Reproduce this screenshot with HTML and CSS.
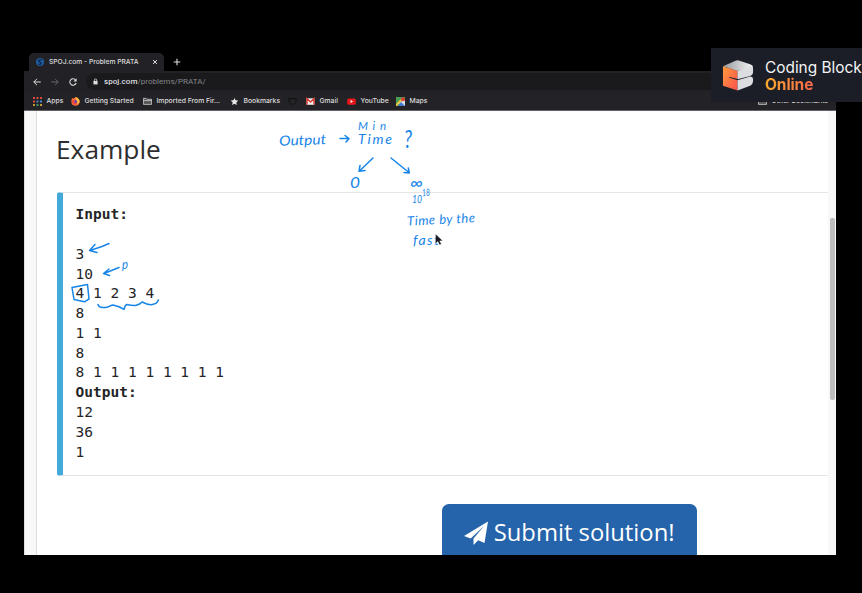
FILE: index.html
```html
<!DOCTYPE html>
<html lang="en">
<head>
<meta charset="utf-8">
<title>SPOJ.com - Problem PRATA</title>
<link rel="stylesheet" href="styles.css">
</head>
<body>
<main class="browser">
  <div class="tabs">
    <div class="tab">
      <svg class="favicon" viewBox="0 0 8 8"><circle cx="4" cy="4" r="4" fill="#1e5b9d"/><path d="M5.800 1.800C3.500 1 2 2.500 3.200 3.500S6 5 4.500 6.200L2.400 6.400" fill="none" stroke="#0c2345" stroke-width="1.200"/></svg>
      <span class="tab-title">SPOJ.com - Problem PRATA</span>
      <svg class="close" viewBox="0 0 6 6"><path d="M1 1l4 4M5 1l-4 4" stroke="#ddd" stroke-width="1"/></svg>
    </div>
    <svg class="plus" viewBox="0 0 8 8"><path d="M4 .7v6.600M.7 4h6.600" stroke="#ddd" stroke-width="1.100"/></svg>
  </div>
  <div class="toolbar">
    <svg class="nav" viewBox="0 0 8 8"><path d="M7.800 4H.8M4 .8L.8 4 4 7.200" fill="none" stroke="#dedede"/></svg>
    <svg class="nav" viewBox="0 0 8 8"><path d="M.2 4h7M4 .8L7.200 4 4 7.200" fill="none" stroke="#66666a"/></svg>
    <svg class="nav" viewBox="0 0 8 8"><path d="M6.700 2.200A3.200 3.200 0 1 0 7.100 5" fill="none" stroke="#dedede" stroke-width="1.100"/><path d="M7.600.3v3.200H4.400z" fill="#dedede"/></svg>
    <div class="address">
      <svg class="lock" viewBox="0 0 6 7"><path d="M.5 2.800h5V7h-5z" fill="#ddd"/><path d="M1.600 3V1.800a1.400 1.400 0 0 1 2.800 0V3" fill="none" stroke="#ddd" stroke-width=".9"/></svg>
      <span class="url"><b>spoj.com</b>/problems/PRATA/</span>
    </div>
  </div>
  <nav class="bookmarks">
    <span class="bm apps"><svg viewBox="0 0 9 9"><g fill="#d94b3d"><path d="M0 0h2v2H0zM0 3.500h2v2H0z"/><path d="M3.500 0h2v2h-2zM7 0h2v2H7z"/></g><path d="M0 7h2v2H0zM7 7h2v2H7z" fill="#c69b36"/><path d="M3.500 3.500h2v2h-2zM7 3.500h2v2H7z" fill="#4285c9"/><path d="M3.500 7h2v2h-2z" fill="#3f9a60"/></svg><span>Apps</span></span>
    <span class="bm start"><svg viewBox="0 0 10 10"><path d="M1 2l1-1 1 1 2-2c3 1 5 3 4.500 6a4.600 4.600 0 0 1-9 0C.3 4 .5 3 1 2z" fill="#ff7139"/><path d="M5 0c3 1 5 3.200 4.500 6L7 8z" fill="#ffbd3c"/><circle cx="5" cy="5" r="1.800" fill="#673bc4"/><path d="M1 4c2-1 3.500 0 3.500 1L3 6c1 1.500 3 1 4-.5 0 4-6 4-6-1.500z" fill="#f0443b"/></svg><span>Getting Started</span></span>
    <span class="bm import"><svg viewBox="0 0 10 9"><path d="M.5 7.700V1h3l1 1h5v5.700zM.5 3.500h9" fill="#555" stroke="#ddd" stroke-width=".8"/></svg><span>Imported From Fir...</span></span>
    <span class="bm stars"><svg viewBox="0 0 10 10"><path d="M5 1l1.200 2.700 3 .3L7 6l.7 3L5 7.400 2.300 9 3 6 .8 4l3-.3z" fill="#e8e8e8"/></svg><span>Bookmarks</span></span>
    <span class="bm git"><svg viewBox="0 0 9 9"><path d="M3 8.200V6.600C1 6 .7 5 1 3L.9 1l1.500.6h4L8 1v2c.4 2-.2 3-2 3.600v1.600" fill="none" stroke="#101012" stroke-width="1"/></svg></span>
    <span class="bm gmail"><svg viewBox="0 0 9 9"><path d="M.5 1.300h8v6.500h-8z" fill="#eee"/><path d="M1 7.700V1.500L4.500 5 8 1.500v6.200" fill="none" stroke="#d83b32" stroke-width="1.400"/></svg><span>Gmail</span></span>
    <span class="bm tube"><svg viewBox="0 0 9 9"><rect x=".2" y="1.400" width="8.600" height="6.300" rx="1.500" fill="#e8181b"/><path d="M3.600 3.100v2.800L6 4.500z" fill="#fff"/></svg><span>YouTube</span></span>
    <span class="bm maps"><svg viewBox="0 0 9 9"><path d="M0 0h9v9H0z" fill="#4b9d54"/><path d="M9 2v7H5L3 6z" fill="#d9dfe5"/><path d="M2 9l3-4 4 4z" fill="#3f78d0"/><path d="M0 7l6-6 1 1-6 7H0z" fill="#f1c744"/><circle cx="7" cy="2.200" r="2" fill="#d93e32"/></svg><span>Maps</span></span>
    <span class="bm other"><svg viewBox="0 0 10 9"><path d="M.5 7.700V1h3l1 1h5v5.700z" fill="#555" stroke="#ddd" stroke-width=".8"/></svg><span>Other Bookmarks</span></span>
  </nav>
  <div class="page">
    <section class="content">
      <h2>Example</h2>
      <pre><b>Input:</b>

3
10
4 1 2 3 4
8
1 1
8
8 1 1 1 1 1 1 1 1
<b>Output:</b>
12
36
1</pre>
      <div class="submit">
        <svg viewBox="0 0 24 24"><path d="M0 15L24 .5 20.500 22l-6.300-2.700L9.500 24v-6.500L20 5 6.700 17.500z" fill="#fff"/></svg>
        <span>Submit solution!</span>
      </div>
    </section>
    <div class="scrollbar"><div class="thumb"></div></div>
  </div>
</main>

<svg class="ink" viewBox="0 0 862 593">
  <g class="strokes">
    <path d="M109 243.500L102 246.500 90 250.500M95 244.500L89.500 250.500 97 252.500"/>
    <path d="M119 267.500L104 273.500M109 269L103.500 273.500 109.500 275.500"/>
    <path d="M72 287.500L87.500 284.500 89 299 84.500 301.800 74 299.500z"/>
    <path d="M98 304.500c1 4 4 2.500 7 3 4 0 4-2 8-2.500 4 1 9 3 11 4.500 1-3 1-5 3-5 3 1 5 1 8 1 4-1 5-1 7-3.500 4 2 8 4 12 2 3 0 3-2 4.500-4"/>
    <path d="M340 138.500h8.500M345 135.500l4 3-3 3.500"/>
    <path d="M373 158L359.500 171M360 165.500l-1 5.800 6-.8"/>
    <path d="M391 158l18 14.500M404 172.500l5.300.5-1-5"/>
  </g>
  <g class="writing">
    <text x="122" y="269" font-size="14" textLength="6" lengthAdjust="spacingAndGlyphs" stroke-width=".7">p</text>
    <text x="279" y="145" font-size="14" textLength="47" lengthAdjust="spacingAndGlyphs" transform="rotate(-2 302 140)">Output</text>
    <text x="358" y="129.500" font-size="11.500" textLength="28" lengthAdjust="spacing">Min</text>
    <text x="358" y="144" font-size="14" textLength="34" lengthAdjust="spacing">Time</text>
    <text x="404" y="148" font-size="25" textLength="8" lengthAdjust="spacingAndGlyphs">?</text>
    <text x="350" y="187.500" font-size="15" textLength="10" lengthAdjust="spacingAndGlyphs">0</text>
    <text x="410" y="189" font-size="17" textLength="13" lengthAdjust="spacingAndGlyphs">∞</text>
    <text x="412" y="203" font-size="11" textLength="10" lengthAdjust="spacingAndGlyphs">10</text>
    <text x="422" y="196" font-size="10" textLength="8" lengthAdjust="spacingAndGlyphs" transform="rotate(-5 426 192)">18</text>
    <text x="407" y="224" font-size="13" textLength="68" lengthAdjust="spacing" transform="rotate(-3 440 219)">Time by the</text>
    <text x="413" y="245" font-size="14" textLength="26" lengthAdjust="spacing">fast</text>
  </g>
  <path d="M435.500 234v9.500l2.300-2 1.800 3.600 1.800-1-1.700-3.200 3-.2z" fill="#17171d" stroke="#fff" stroke-width=".4"/>
</svg>

<aside class="brand">
  <svg viewBox="0 0 34 32">
    <defs><linearGradient id="face" x2="1" y2="1"><stop stop-color="#ff9b38"/><stop offset="1" stop-color="#fa5050"/></linearGradient><linearGradient id="lid"><stop stop-color="#96989d"/><stop offset="1" stop-color="#f5f5f5"/></linearGradient></defs>
    <path d="M1 7L14 1.300q2-1 4 0L29 5q3 1 3 3L16 12z" fill="url(#lid)"/>
    <path d="M1 7l15 5v8l-8-2-1 .5 9 3V32L1 27z" fill="url(#face)"/>
    <path d="M16 12l14-5q2 0 2 2v4q0 3-3 4l-13 3.300zM16 21.500l13-4q3 0 3 3v2q0 3-3 4.500L16 32z" fill="#dcdde0"/>
  </svg>
  <div class="brand-name"><span>Coding Block</span><strong>Online</strong></div>
</aside>
</body>
</html>
```
FILE: styles.css
```css
* { box-sizing: border-box; }
body {
  margin: 0;
  width: 862px;
  height: 593px;
  padding: 53px 0 0 24px;
  overflow: hidden;
  background: #000;
  font-family: "Open Sans", sans-serif;
}
svg { display: block; flex: none; }
.browser { width: 812px; height: 502px; overflow: hidden; display: flex; flex-direction: column; }
.tabs { height: 18px; flex: none; display: flex; align-items: center; padding-left: 5px; }
.tab {
  width: 135px;
  height: 18px;
  display: flex;
  align-items: center;
  padding: 0 6px 0 7px;
  border-radius: 5px 5px 0 0;
  background: #222226;
  color: #dededf;
}
.favicon { width: 8px; height: 8px; margin-right: 5px; }
.tab-title { font: 500 6.7px/18px Inter, sans-serif; white-space: nowrap; }
.close { width: 6px; height: 6px; margin-left: auto; }
.plus { width: 8px; height: 8px; margin-left: 9px; }
.toolbar {
  height: 21px;
  flex: none;
  display: flex;
  align-items: center;
  gap: 10px;
  padding: 0 0 0 9px;
  background: #222226;
}
.nav { width: 8px; height: 8px; }
.address {
  flex: 1;
  height: 17px;
  margin-left: -1px;
  padding-left: 7px;
  display: flex;
  align-items: center;
  gap: 6px;
  border-radius: 9px 0 0 9px;
  background: #1a1a1d;
}
.lock { width: 5px; height: 7px; }
.url { font: 400 8px/17px Roboto, sans-serif; letter-spacing: .04px; color: #858589; }
.url b { font-weight: 500; color: #dedee0; }
.bookmarks {
  height: 19px;
  flex: none;
  display: flex;
  align-items: center;
  padding-left: 9px;
  background: #232226;
  border-bottom: 1px solid #626166;
  color: #dededf;
  font: 500 6.8px/18px Inter, sans-serif;
}
.bm { display: flex; align-items: center; gap: 4.5px; white-space: nowrap; flex: none; }
.bm svg { width: 9px; height: 9px; }
.apps { width: 38px; }
.start { width: 72px; }
.import { width: 87px; }
.stars { width: 58px; }
.git { width: 18px; }
.gmail { width: 41px; }
.tube { width: 49px; }
.maps { width: 362px; }
.page { flex: 1; min-height: 0; display: flex; background: #f8f8f8; padding-left: 11px; border-left: 1px solid #ddd; }
.content {
  width: 792px;
  flex: none;
  padding: 20px 0 0 20px;
  border-left: 1px solid #dedede;
  background: #fff;
}
h2 { margin: 0 0 0 -1px; height: 61px; font-size: 26.3px; line-height: 36px; font-weight: 400; color: #2e2e30; }
pre {
  margin: 0;
  height: 284px;
  padding: 12.2px 0 0 12.6px;
  border: 1px solid #e5e5e5;
  border-left: 6px solid #42a9d8;
  border-right: 0;
  border-radius: 3px 0 0 3px;
  color: #252528;
  font: 14.5px/19.78px "DejaVu Sans Mono", monospace;
}
.submit {
  width: 255px;
  height: 60px;
  margin: 27.5px 0 0 384.7px;
  padding: 0 0 0 22px;
  display: flex;
  align-items: center;
  gap: 6px;
  background: #2563aa;
  border-radius: 7px;
  color: #fff;
  font-size: 23.8px;
  line-height: 58px;
  white-space: nowrap;
}
.submit svg { width: 24px; height: 24px; margin-top: -2px; }
.submit span { margin-top: -3px; }
.scrollbar { width: 8px; padding: 107px 1px 0 2px; background: #f8f8f9; }
.thumb { height: 182px; border-radius: 2px; background: #bdbcbf; }
.ink { position: absolute; left: 0; top: 0; width: 862px; height: 593px; }
.strokes { fill: none; stroke: #1885e8; stroke-width: 1.5; stroke-linecap: round; stroke-linejoin: round; }
.writing { fill: #1885e8; font-family: Lato, "Open Sans", sans-serif; font-style: italic; }
.brand {
  position: absolute;
  left: 711px;
  top: 48px;
  width: 151px;
  height: 54px;
  display: flex;
  gap: 10px;
  padding: 11px 0 0 11px;
  overflow: hidden;
  background: #1b1e27;
  color: #f4f4f5;
}
.brand svg { width: 33px; height: 32px; }
.brand-name { display: flex; flex-direction: column; font: 400 15.4px/17px Inter, sans-serif; white-space: nowrap; }
.brand-name strong {
  width: 50px;
  font-size: 15.5px;
  font-weight: 700;
  letter-spacing: -.1px;
  color: transparent;
  background: linear-gradient(90deg, #faaa2e, #fb654d);
  background-clip: text;
  -webkit-background-clip: text;
}
```
